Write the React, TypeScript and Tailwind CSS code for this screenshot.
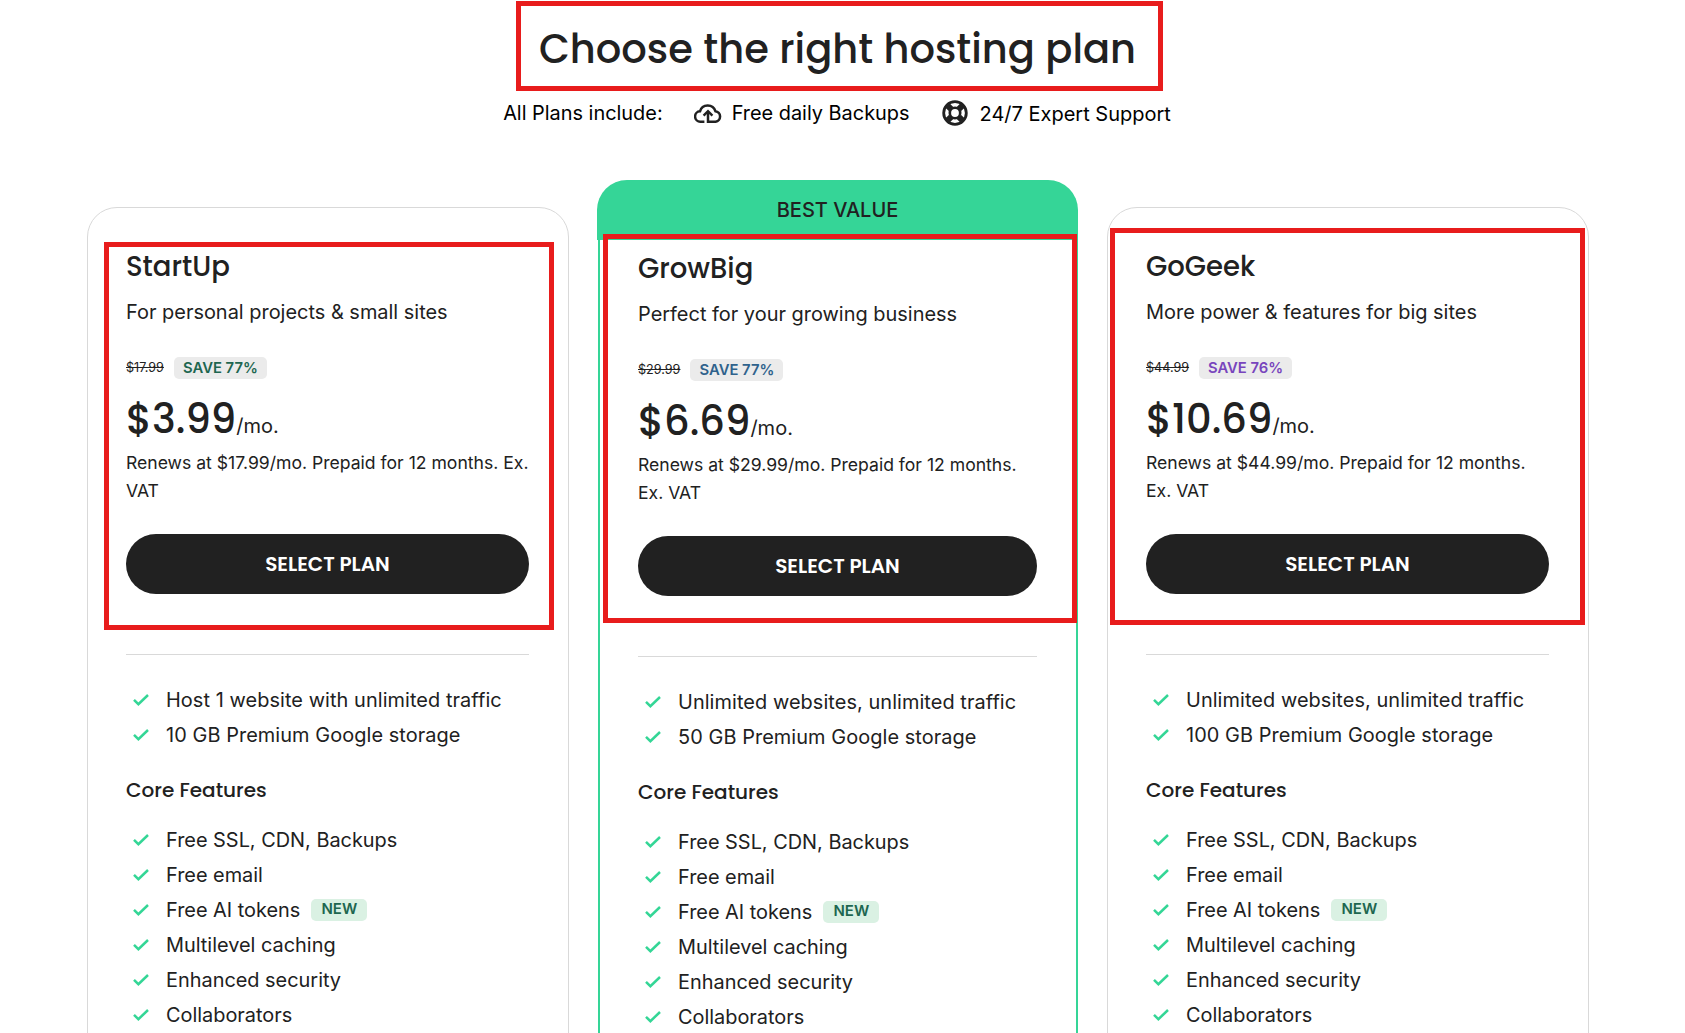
type Plan = {
  name: string
  tagline: string
  oldPrice: string
  save: string
  saveColor: string
  price: string
  renews: string
  highlights: string[]
  best?: boolean
  outline: string
}

const plans: Plan[] = [
  {
    name: 'StartUp',
    tagline: 'For personal projects & small sites',
    oldPrice: '$17.99',
    save: 'SAVE 77%',
    saveColor: 'text-[#1e6650]',
    price: '$3.99',
    renews: 'Renews at $17.99/mo. Prepaid for 12 months. Ex. VAT',
    highlights: ['Host 1 website with unlimited traffic', '10 GB Premium Google storage'],
    outline: 'left-[16px] top-[34px] h-[388px] w-[450px]',
  },
  {
    name: 'GrowBig',
    tagline: 'Perfect for your growing business',
    oldPrice: '$29.99',
    save: 'SAVE 77%',
    saveColor: 'text-[#2f628c]',
    price: '$6.69',
    renews: 'Renews at $29.99/mo. Prepaid for 12 months. Ex. VAT',
    highlights: ['Unlimited websites, unlimited traffic', '50 GB Premium Google storage'],
    best: true,
    outline: 'left-[3px] top-[-6px] h-[389px] w-[474px]',
  },
  {
    name: 'GoGeek',
    tagline: 'More power & features for big sites',
    oldPrice: '$44.99',
    save: 'SAVE 76%',
    saveColor: 'text-[#7845bd]',
    price: '$10.69',
    renews: 'Renews at $44.99/mo. Prepaid for 12 months. Ex. VAT',
    highlights: ['Unlimited websites, unlimited traffic', '100 GB Premium Google storage'],
    outline: 'left-[2px] top-[20px] h-[397px] w-[475px]',
  },
]

const coreFeatures = [
  'Free SSL, CDN, Backups',
  'Free email',
  'Free AI tokens',
  'Multilevel caching',
  'Enhanced security',
  'Collaborators',
]

const display = "font-['Poppins','Inter',sans-serif]"

function CheckIcon() {
  return (
    <svg className="ml-[7px] mr-[17px] h-3 w-4 shrink-0" viewBox="0 0 16 12" fill="none">
      <path d="M1 5.8L5.4 10.2L15 1" stroke="#34d696" strokeWidth="2.5" />
    </svg>
  )
}

function CloudIcon() {
  return (
    <svg className="h-5 w-7 shrink-0" viewBox="0 0 28 20" fill="none" stroke="#212121" strokeWidth="2.5">
      <path d="M10.4 18.7H6.6A5.2 5.2 0 0 1 6 8.3A8 8 0 0 1 21.4 8.2A5.3 5.3 0 0 1 21.6 18.7H14V9" />
      <path d="M9.6 12.6L14 8.2L18.4 12.6" />
    </svg>
  )
}

function SupportIcon() {
  return (
    <svg className="h-[26px] w-[26px] shrink-0" viewBox="0 0 26 26" fill="none" stroke="#212121">
      <circle cx="13" cy="13" r="11.3" strokeWidth="2.8" />
      <circle cx="13" cy="13" r="5.2" strokeWidth="2.6" />
      <path d="M4.8 4.8L9.2 9.2M16.8 16.8L21.2 21.2M21.2 4.8L16.8 9.2M9.2 16.8L4.8 21.2" strokeWidth="6" />
    </svg>
  )
}

function FeatureList({ items }: { items: string[] }) {
  return (
    <ul>
      {items.map((item) => (
        <li key={item} className="flex h-[35px] items-center whitespace-nowrap text-[19.9px]">
          <CheckIcon />
          <span className="pt-[2px]">{item}</span>
          {item === 'Free AI tokens' && (
            <span className="ml-[11px] flex h-[22px] w-14 items-center justify-center rounded-[5px] bg-[#daf1e3] text-[15px] font-semibold text-[#1e6650]">
              NEW
            </span>
          )}
        </li>
      ))}
    </ul>
  )
}

function PlanCard({ plan }: { plan: Plan }) {
  return (
    <div className={plan.best ? 'w-[482px]' : 'w-[482px] pt-[27px]'}>
      {plan.best && (
        <div className="mr-px flex h-[60px] items-center justify-center rounded-t-[30px] bg-[#35d597] text-[20px] font-medium">
          BEST VALUE
        </div>
      )}
      <div
        className={
          plan.best
            ? 'relative mx-px h-[900px] border-x-2 border-[#35d597] pl-[38px] pr-[39px] pt-[7px]'
            : 'relative h-[930px] rounded-t-[30px] border border-[#d9d9d9] pl-[38px] pr-[39px] pt-[37px]'
        }
      >
        <h2 className={`${display} h-[44px] text-[27.5px] font-medium leading-[44px]`}>{plan.name}</h2>
        <p className="mt-[7px] h-[32px] whitespace-nowrap text-[19.95px] leading-[32px]">{plan.tagline}</p>

        <div className="mt-[29px] flex h-[22px] items-center gap-[10px]">
          <span className="text-[12.6px] line-through">{plan.oldPrice}</span>
          <span
            className={`flex h-[22px] w-[93px] items-center justify-center rounded-[5px] bg-[#ebebeb] text-[14.8px] font-semibold ${plan.saveColor}`}
          >
            {plan.save}
          </span>
        </div>
        <div className="mt-[10px] flex h-[60px] items-baseline">
          <span className={`${display} text-[40px] font-medium leading-[60px]`}>{plan.price}</span>
          <span className="text-[20px]">/mo.</span>
        </div>
        <p className="h-14 text-[17.58px] leading-7">{plan.renews}</p>

        <button className={`${display} mt-[29px] block h-[60px] w-full rounded-full bg-[#212121] text-[20px] font-semibold text-white`}>
          SELECT PLAN
        </button>
        <div className="mb-[27px] mt-[60px] h-px bg-[#d9d9d9]" />

        <div className="tracking-[0.08px]">
          <FeatureList items={plan.highlights} />
        </div>
        <h3 className={`${display} mb-[14px] mt-[21px] h-[35px] text-[20px] font-medium leading-[35px]`}>Core Features</h3>
        <FeatureList items={coreFeatures} />

        <div className={`absolute border-[5px] border-[#e81c1c] ${plan.outline}`} />
      </div>
    </div>
  )
}

export default function App() {
  return (
    <div className="h-[1033px] w-[1685px] overflow-hidden bg-white font-['Inter',sans-serif] text-[#212121]">
      <header className="flex h-[180px] flex-col items-center pr-[11px] pt-px">
        <h1
          className={`${display} ml-[5px] flex h-[90px] w-[647px] items-center justify-center whitespace-nowrap border-[5px] border-[#e81c1c] pr-[4px] pt-[5px] text-[40px] font-medium`}
        >
          Choose the right hosting plan
        </h1>
        <div className="mt-[7px] flex h-[30px] items-center whitespace-nowrap text-[19.9px] text-black">
          <span className="mr-[31px] pt-[2px]">All Plans include:</span>
          <CloudIcon />
          <span className="ml-2.5 mr-8 pt-[2px]">Free daily Backups</span>
          <SupportIcon />
          <span className="ml-3 pt-[2px] text-[20px]">24/7 Expert Support</span>
        </div>
      </header>

      <main className="flex gap-7 pl-[87px]">
        {plans.map((plan) => (
          <PlanCard key={plan.name} plan={plan} />
        ))}
      </main>
    </div>
  )
}
